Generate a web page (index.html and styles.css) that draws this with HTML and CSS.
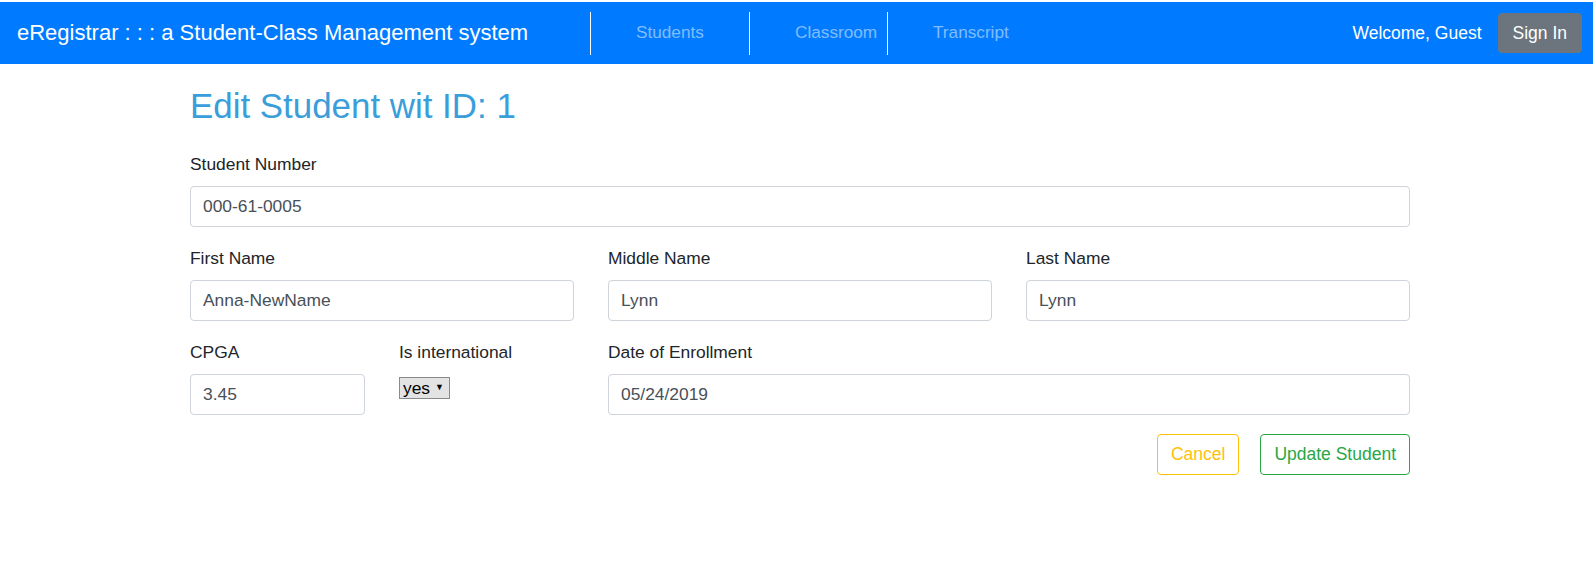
FILE: index.html
```html
<!DOCTYPE html>
<html lang="en">
<head>
<meta charset="utf-8">
<title>eRegistrar - Edit Student</title>
<link rel="stylesheet" href="styles.css">
</head>
<body>
<nav class="navbar">
  <a class="brand" href="#">eRegistrar : : : a Student-Class Management system</a>
  <ul class="nav">
    <li class="nav-item item-students"><a class="nav-link" href="#">Students</a></li>
    <li class="nav-item item-classroom"><a class="nav-link" href="#">Classroom</a></li>
    <li class="nav-item item-transcript"><a class="nav-link" href="#">Transcript</a></li>
  </ul>
  <div class="nav-right">
    <span class="welcome">Welcome, Guest</span>
    <button class="btn btn-signin" type="button">Sign In</button>
  </div>
</nav>

<main class="container">
  <h1 class="page-title">Edit Student wit ID: 1</h1>
  <form class="form-grid">
    <div class="form-group span-12">
      <label for="sn">Student Number</label>
      <input id="sn" class="form-control" type="text" value="000-61-0005">
    </div>
    <div class="form-group span-4">
      <label for="fn">First Name</label>
      <input id="fn" class="form-control" type="text" value="Anna-NewName">
    </div>
    <div class="form-group span-4">
      <label for="mn">Middle Name</label>
      <input id="mn" class="form-control" type="text" value="Lynn">
    </div>
    <div class="form-group span-4">
      <label for="ln">Last Name</label>
      <input id="ln" class="form-control" type="text" value="Lynn">
    </div>
    <div class="form-group span-2">
      <label for="cpga">CPGA</label>
      <input id="cpga" class="form-control" type="text" value="3.45">
    </div>
    <div class="form-group span-2">
      <label for="intl">Is international</label>
      <span class="select-wrap">
        <select id="intl" class="plain-select">
          <option>yes</option>
          <option>no</option>
        </select>
        <span class="select-arrow">&#9660;</span>
      </span>
    </div>
    <div class="form-group span-8">
      <label for="doe">Date of Enrollment</label>
      <input id="doe" class="form-control" type="text" value="05/24/2019">
    </div>
    <div class="actions span-12">
      <button class="btn btn-outline-warning" type="button">Cancel</button>
      <button class="btn btn-outline-success" type="submit">Update Student</button>
    </div>
  </form>
</main>
</body>
</html>
```

FILE: styles.css
```css
* {
  box-sizing: border-box;
}

html, body {
  margin: 0;
  padding: 0;
  background: #fff;
}

body {
  padding-top: 2px;
  font-family: "Liberation Sans", Arial, Helvetica, sans-serif;
  font-size: 17.4px;
  line-height: 1.5;
  color: #212529;
}

/* ---------- navbar ---------- */
.navbar {
  height: 62px;
  background: #007bff;
  display: flex;
  align-items: center;
  padding: 0 11px 0 17px;
}

.brand {
  flex: 0 0 573px;
  color: #fff;
  text-decoration: none;
  font-size: 22px;
  line-height: 30px;
  white-space: nowrap;
}

.nav {
  list-style: none;
  margin: 0;
  padding: 0;
  display: flex;
  align-items: center;
}

.nav-item {
  height: 43px;
  display: flex;
  align-items: center;
  border-left: 1px solid #fff;
  padding-left: 45px;
}

.item-students { width: 159px; }
.item-classroom { width: 138px; }

.nav-link {
  color: rgba(255, 255, 255, 0.5);
  text-decoration: none;
  font-size: 17.2px;
  white-space: nowrap;
}

.nav-right {
  margin-left: auto;
  display: flex;
  align-items: center;
  gap: 16px;
}

.welcome {
  color: #fff;
  font-size: 17.5px;
}

.btn {
  font-family: inherit;
  font-size: 17.5px;
  line-height: 1.5;
  height: 41px;
  padding: 0 13px;
  border-radius: 4px;
  border: 1px solid transparent;
  background: transparent;
  cursor: pointer;
}

.btn-signin {
  height: 40px;
  background: #6c757d;
  border-color: #6c757d;
  color: #fff;
  padding: 0 14px;
}

/* ---------- content ---------- */
.container {
  width: 1220px;
  margin-left: 190px;
}

.page-title {
  margin: 21px 0 24px;
  font-size: 34.9px;
  font-weight: 400;
  line-height: 42px;
  color: #3a9edb;
}

.form-grid {
  display: grid;
  grid-template-columns: repeat(12, 1fr);
  column-gap: 34px;
}

.span-12 { grid-column: span 12; }
.span-8 { grid-column: span 8; }
.span-4 { grid-column: span 4; }
.span-2 { grid-column: span 2; }

.form-group {
  margin-bottom: 18px;
}

.form-group label {
  display: block;
  margin-bottom: 9px;
  line-height: 26px;
}

.form-control {
  display: block;
  width: 100%;
  height: 41px;
  padding: 0 12px;
  font-family: inherit;
  font-size: 17.4px;
  color: #495057;
  background: #fff;
  border: 1px solid #ced4da;
  border-radius: 4px;
}

.select-wrap {
  position: relative;
  display: inline-block;
  margin-top: 3px;
}

.plain-select {
  -webkit-appearance: none;
  appearance: none;
  display: block;
  width: 51px;
  height: 22px;
  padding: 0 0 0 3px;
  font-family: inherit;
  font-size: 17.4px;
  line-height: 20px;
  color: #000;
  background: #e3e3e3;
  border: 1px solid #8a8a8a;
  border-radius: 0;
}

.select-arrow {
  position: absolute;
  right: 6px;
  top: 6px;
  font-size: 9px;
  line-height: 9px;
  color: #000;
  pointer-events: none;
}

.actions {
  display: flex;
  justify-content: flex-end;
  gap: 21px;
  margin-top: 1px;
}

.btn-outline-warning {
  color: #ffc107;
  border-color: #ffc107;
}

.btn-outline-success {
  color: #28a745;
  border-color: #28a745;
}
```
